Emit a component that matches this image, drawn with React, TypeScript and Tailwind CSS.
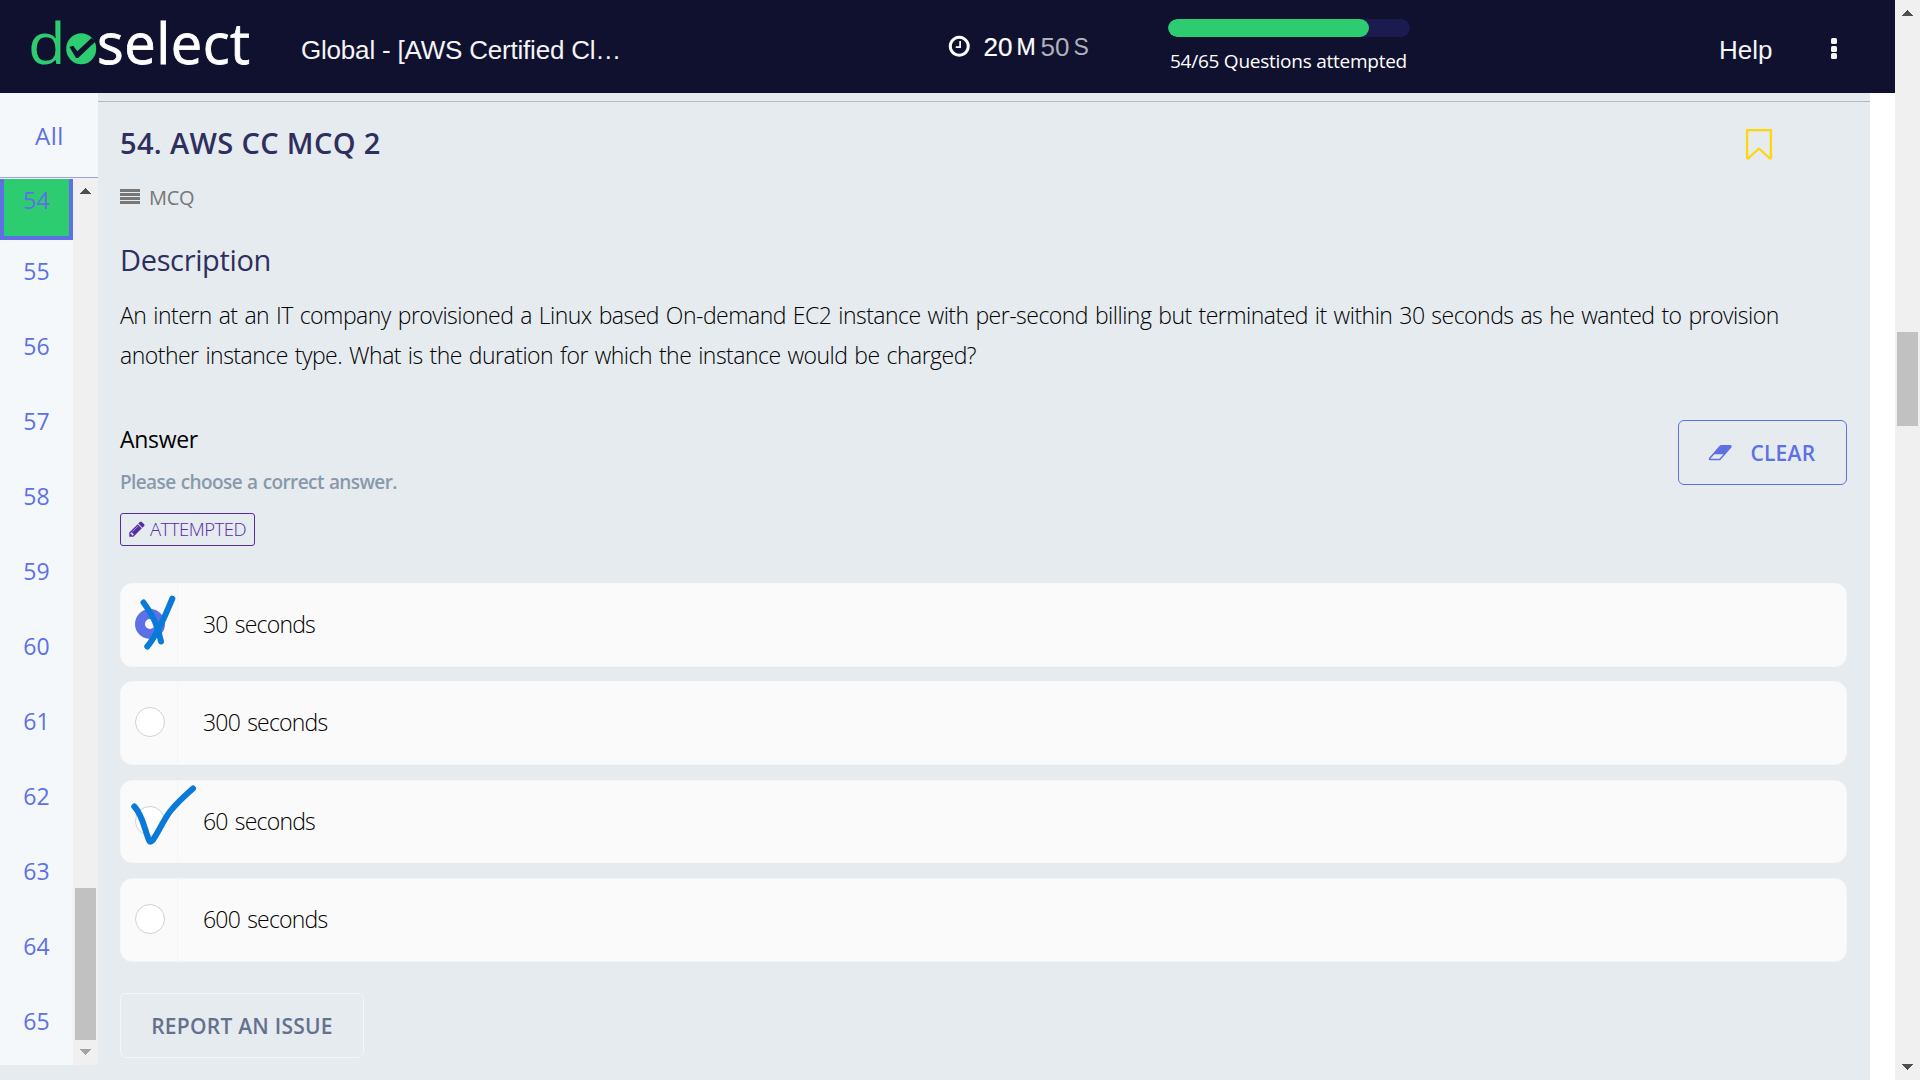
import type { ReactNode } from "react";

const questions = ["55", "56", "57", "58", "59", "60", "61", "62", "63", "64", "65"];

function Triangle({ down = false, className }: { down?: boolean; className: string }) {
  return (
    <svg width="11" height="6" viewBox="0 0 11 6" className={className} shapeRendering="crispEdges">
      <path d={down ? "M0 0H11L5.5 6Z" : "M0 6H11L5.5 0Z"} fill="currentColor" />
    </svg>
  );
}

function Logo() {
  return (
    <div className="flex h-[60px] w-[226px] font-['Open_Sans'] text-[56px] leading-[60px] font-medium">
      <span className="w-[38px] origin-left scale-x-[1.1] text-[#2ecc71]">d</span>
      <svg width="31" height="32" viewBox="0 0 31 32" className="mt-[21px] shrink-0">
        <ellipse cx="15.2" cy="15.8" rx="15" ry="15.5" fill="#2ecc71" />
        <path d="M3.500 14L7.200 12.800L11.300 18.200L25.500 5L29.500 8.500L12 25L10 25Z" fill="#10112e" />
      </svg>
      <span className="tracking-[0.5px] text-white [-webkit-text-stroke:0.8px_white]">select</span>
    </div>
  );
}

function ClockIcon() {
  return (
    <svg width="24.5" height="24.5" viewBox="0 0 1792 1792" className="shrink-0" fill="currentColor">
      <path d="M1024 544v448q0 14-9 23t-23 9h-320q-14 0-23-9t-9-23v-64q0-14 9-23t23-9h224v-352q0-14 9-23t23-9h64q14 0 23 9t9 23zm416 352q0-148-73-273t-198-198-273-73-273 73-198 198-73 273 73 273 198 198 273 73 273-73 198-198 73-273zm224 0q0 209-103 385.500t-279.500 279.500-385.500 103-385.500-103-279.500-279.500-103-385.500 103-385.500 279.500-279.500 385.500-103 385.500 103 279.500 279.500 103 385.500z" />
    </svg>
  );
}

function PencilIcon() {
  return (
    <svg width="18" height="18" viewBox="0 0 1792 1792" className="shrink-0" fill="currentColor">
      <path d="M491 1536l91-91-235-235-91 91v107h128v128h107zM1014 608q0-22-22-22-10 0-17 7l-542 542q-7 7-7 17 0 22 22 22 10 0 17-7l542-542q7-7 7-17zM960 416l416 416-832 832h-416v-416zM1643 512q0 53-37 90l-166 166-416-416 166-165q36-38 90-38 53 0 91 38l235 234q37 39 37 91z" />
    </svg>
  );
}

function EraserIcon() {
  return (
    <svg width="24.500" height="21.400" viewBox="0 0 2048 1792" className="shrink-0" fill="currentColor">
      <path d="M960 1408l336-384h-768l-336 384h768zm1013-1077q15 34 9.500 71.500t-30.500 65.500l-896 1024q-38 44-96 44h-768q-38 0-69.500-20.500t-47.500-54.500q-15-34-9.500-71.500t30.500-65.500l896-1024q38-44 96-44h768q38 0 69.500 20.500t47.500 54.500z" />
    </svg>
  );
}

function Header() {
  return (
    <header className="flex h-[93px] w-full shrink-0 items-start bg-[#10112e] text-white">
      <div className="mt-3 ml-7">
        <Logo />
      </div>
      <h1 className="mt-[35px] ml-[47px] w-[647px] font-['Liberation_Sans'] text-[26px] leading-[30px] tracking-[-0.2px] whitespace-nowrap text-[#f4f4f6]">
        Global - [AWS Certified Cl…
      </h1>
      <div className="mt-[31px] flex h-[30px] w-[220px] items-center font-['Liberation_Sans'] text-[26px] leading-[30px]">
        <span className="-ml-[1px]">
          <ClockIcon />
        </span>
        <span className="mt-px ml-[12px] [-webkit-text-stroke:0.2px_white]">20</span>
        <span className="mt-px ml-[4px] text-[23px] [-webkit-text-stroke:0.2px_white]">M</span>
        <span className="mt-px ml-[5px] text-[#b0b0ba]">50</span>
        <span className="mt-px ml-[4px] text-[23px] text-[#b0b0ba]">S</span>
      </div>
      <div className="mt-[19px] w-[242px]">
        <div className="h-[18px] overflow-hidden rounded-full bg-[#1b1b4f]">
          <div className="h-full w-[83.1%] rounded-full bg-[#2ecc71]" />
        </div>
        <p className="mt-[12px] ml-[2px] font-['Open_Sans'] text-[19px] leading-6 font-medium tracking-[-0.25px] whitespace-nowrap">
          54/65 Questions attempted
        </p>
      </div>
      <span className="mt-[35px] ml-[309px] font-['Liberation_Sans'] text-[26px] leading-[30px] text-[#f4f4f6]">Help</span>
      <div className="mt-[38px] ml-[59px] flex flex-col gap-[1.500px]">
        <i className="size-[6px] rounded-[1.500px] bg-[#f4f4f6]" />
        <i className="size-[6px] rounded-[1.500px] bg-[#f4f4f6]" />
        <i className="size-[6px] rounded-[1.500px] bg-[#f4f4f6]" />
      </div>
    </header>
  );
}

function Sidebar() {
  return (
    <aside className="flex h-[972px] w-[98px] shrink-0 flex-col bg-[#f4f8fb] font-['Open_Sans'] text-[23px] text-[#5d70e4]">
      <div className="flex h-[85px] items-center justify-center border-b border-[#9ba3de] font-[380]">
        <span className="mt-[2px] ml-px text-[24px] tracking-[0.5px]">All</span>
      </div>
      <div className="flex h-[887px]">
        <div className="flex w-[73px] flex-col overflow-hidden pt-px">
          <div className="h-[61px] shrink-0 border-x-4 border-b-4 border-[#5d70e4] bg-[#2ecc71] pt-[5px] text-center leading-[32px]">54</div>
          <div className="pt-[15px]">
            {questions.map((q) => (
              <div key={q} className="h-[75px] text-center leading-[32px]">
                {q}
              </div>
            ))}
          </div>
        </div>
        <div className="flex w-[25px] flex-col items-center bg-[#f0f0f0]">
          <Triangle className="mt-[10px] text-[#505050]" />
          <div className="mt-[694px] h-[152px] w-[21px] bg-[#c1c1c1]" />
          <Triangle down className="mt-[9px] text-[#a3a3a3]" />
        </div>
      </div>
    </aside>
  );
}

function Option({ label, selected = false, mark }: { label: string; selected?: boolean; mark?: ReactNode }) {
  return (
    <div className="relative flex h-[83.6px] items-center rounded-xl border border-[#f4f6f8] bg-[#fafafa]">
      <div className="flex h-full w-[57px] items-center border-r border-[#f3f4f6] pb-[2px] pl-[14px]">
        <span
          className={
            selected
              ? "size-[30px] rounded-full border-[10px] border-[#5d70e4] bg-white"
              : "size-[30px] rounded-full border border-[#cdd2da] bg-white"
          }
        />
      </div>
      <span className="mb-[2px] ml-[25px] font-['Open_Sans'] text-[23px] leading-8 font-light tracking-[-0.800px] text-black [word-spacing:2px]">
        {label}
      </span>
      {mark}
    </div>
  );
}

function InkCross() {
  return (
    <svg width="60" height="70" viewBox="120 590 60 70" className="absolute top-[6px] -left-px" fill="none" stroke="#0a7ad8" strokeWidth="6" strokeLinecap="round" strokeLinejoin="round">
      <path d="M143.500 602.500C151 612 158 626 161 641.500" />
      <path d="M172.300 598.700C166 613 159 633 147.300 646.500" />
    </svg>
  );
}

function InkCheck() {
  return (
    <svg width="80" height="70" viewBox="125 780 80 70" className="absolute -top-px left-[4px]" fill="none" stroke="#0a7ad8" strokeWidth="6" strokeLinecap="round" strokeLinejoin="round">
      <path d="M134.300 806.500C143 815 145 832 149.500 841.200Q150.500 842.500 152.500 840.500C158 833 163 821 170 811.500C176 804 185 795.500 193 788.500" />
    </svg>
  );
}

function Question() {
  return (
    <main className="flex h-[987px] w-[1772px] shrink-0 flex-col bg-[#e6ebef] pt-2 font-['Open_Sans']">
      <div className="border-t border-[#b5babf] pr-[23px] pl-[22px]">
        <div className="mt-[21px] flex h-10 justify-between">
          <h2 className="text-[29px] leading-10 font-[560] tracking-[0.350px] text-[#2e2f5e]">54. AWS CC MCQ 2</h2>
          <svg width="28" height="32" viewBox="0 0 28 32" className="mt-[5px] mr-[74px]" fill="none" stroke="#ffd60a" strokeWidth="2.300" strokeLinejoin="round">
            <path d="M2.100 2.200H25.900V29.700Q25.500 31 24.300 30L14 20.500L3.700 30Q2.500 31 2.100 29.700Z" />
          </svg>
        </div>
        <div className="mt-[23px] flex h-6 text-[20px] leading-6 tracking-[-0.3px] text-[#777]">
          <div className="mt-[3px] mr-[9px] flex w-5 flex-col gap-px">
            <i className="h-[3px] w-full bg-[#777]" />
            <i className="h-[3px] w-full bg-[#777]" />
            <i className="h-[3px] w-full bg-[#777]" />
            <i className="h-[3px] w-full bg-[#777]" />
          </div>
          MCQ
        </div>
        <h3 className="mt-[30px] text-[29px] leading-10 font-[380] tracking-[-0.350px] text-[#2e2f5e]">Description</h3>
        <p className="mt-[15px] text-[23px] leading-10 font-light tracking-[-0.510px] whitespace-nowrap text-black [word-spacing:1.400px]">
          An intern at an IT company provisioned a Linux based On-demand EC2 instance with per-second billing but terminated it within 30 seconds as he wanted to provision
          <br />
          another instance type. What is the duration for which the instance would be charged?
        </p>
        <div className="mt-[45px] flex items-start justify-between">
          <div className="pt-1">
            <h4 className="text-[23px] leading-[30px] tracking-[-0.300px] text-black">Answer</h4>
            <p className="mt-4 text-[19px] leading-6 font-semibold tracking-[-0.600px] text-[#8899ab] [word-spacing:0.800px]">Please choose a correct answer.</p>
            <div className="mt-[19px] flex h-[33px] w-[135px] items-center rounded-[3px] border border-[#552ca6] pb-px pl-[7px] text-[18.500px] leading-6 font-light tracking-[-0.500px] text-[#552ca6]">
              <PencilIcon />
              <span className="ml-[4px]">ATTEMPTED</span>
            </div>
          </div>
          <button className="flex h-[65px] w-[169px] items-center rounded-md border border-[#5d70e4] pl-[29px] text-[21px] font-[560] text-[#5d70e4]">
            <EraserIcon />
            <span className="mt-[2px] ml-[18px] tracking-[0.200px]">CLEAR</span>
          </button>
        </div>
        <div className="mt-[37px] flex flex-col gap-[14.800px]">
          <Option label="30 seconds" selected mark={<InkCross />} />
          <Option label="300 seconds" />
          <Option label="60 seconds" mark={<InkCheck />} />
          <Option label="600 seconds" />
        </div>
        <button className="mt-[31px] flex h-[65px] w-[244px] items-center justify-center rounded-md border border-[#f3f5f8] pt-[3px] text-[21px] font-[560] tracking-[0.250px] whitespace-nowrap text-[#64718d]">
          REPORT AN ISSUE
        </button>
      </div>
    </main>
  );
}

export default function App() {
  return (
    <div className="flex h-[1080px] w-[1920px] overflow-hidden bg-white">
      <div className="flex w-[1895px] flex-col">
        <Header />
        <div className="flex h-[987px]">
          <div className="w-[98px] bg-[#e6ebef]">
            <Sidebar />
          </div>
          <Question />
        </div>
      </div>
      <div className="flex w-[25px] flex-col items-center bg-[#f0f0f0]">
        <Triangle className="mt-[10px] text-[#505050]" />
        <div className="mt-[316px] h-[94px] w-[21px] bg-[#c1c1c1]" />
        <Triangle down className="mt-auto mb-[10px] text-[#505050]" />
      </div>
    </div>
  );
}
